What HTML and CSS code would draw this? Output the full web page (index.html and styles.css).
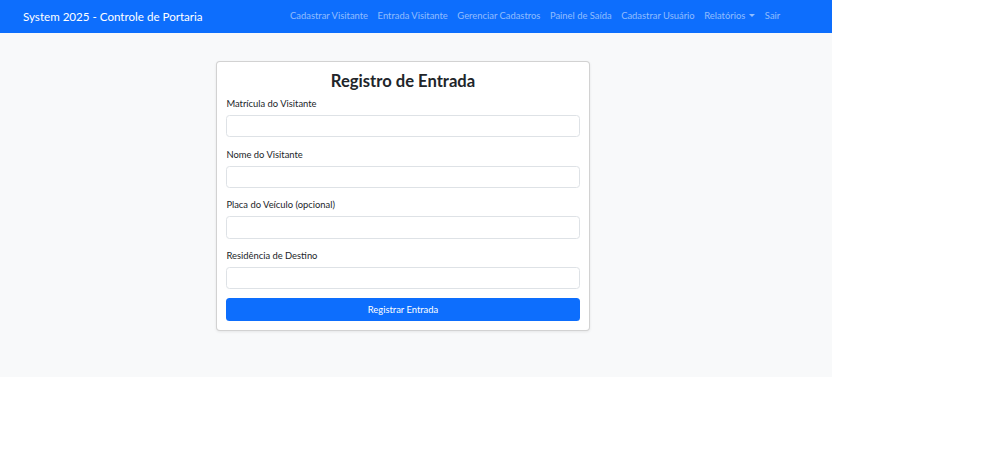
FILE: index.html
```html
<!DOCTYPE html>
<html lang="pt-BR">
<head>
  <meta charset="UTF-8">
  <meta name="viewport" content="width=device-width, initial-scale=1.0">
  <title>Registro de Entrada</title>
  <link rel="stylesheet" href="styles.css">
</head>
<body>
  <div class="page">
    <header class="navbar">
      <a class="brand" href="#">System 2025 - Controle de Portaria</a>
      <nav class="nav-links">
        <a href="#">Cadastrar Visitante</a>
        <a href="#">Entrada Visitante</a>
        <a href="#">Gerenciar Cadastros</a>
        <a href="#">Painel de Saída</a>
        <a href="#">Cadastrar Usuário</a>
        <a href="#" class="dropdown">Relatórios</a>
        <a href="#">Sair</a>
      </nav>
    </header>

    <main class="main">
      <form class="card">
        <h3>Registro de Entrada</h3>
        <div class="field">
          <label for="matricula">Matrícula do Visitante</label>
          <input type="text" id="matricula">
        </div>
        <div class="field">
          <label for="nome">Nome do Visitante</label>
          <input type="text" id="nome">
        </div>
        <div class="field">
          <label for="placa">Placa do Veículo (opcional)</label>
          <input type="text" id="placa">
        </div>
        <div class="field">
          <label for="residencia">Residência de Destino</label>
          <input type="text" id="residencia">
        </div>
        <button type="submit" class="btn-primary">Registrar Entrada</button>
      </form>
    </main>
  </div>
</body>
</html>
```
FILE: styles.css
```css
body { margin: 0; background: #fff; font-family: Lato, "Open Sans", sans-serif; font-size: 9.4px; line-height: 1.5; color: #212529; }
.page { width: 832px; background: #f8f9fa; }

.navbar { height: 33px; background: #0d6efd; display: flex; align-items: center; padding: 0 47px 0 23px; box-sizing: border-box; }
.brand { color: #fff; text-decoration: none; font-size: 11.6px; white-space: nowrap; }
.nav-links { margin-left: auto; display: flex; }
.nav-links a { color: rgba(255, 255, 255, 0.55); text-decoration: none; padding: 0 4.8px; white-space: nowrap; font-size: 9.4px; }
.dropdown::after { content: ""; display: inline-block; margin-left: 4px; vertical-align: 2px; border-top: 3px solid; border-left: 3px solid transparent; border-right: 3px solid transparent; }

.main { padding: 28px 0 46px 216px; }
.card { width: 374px; box-sizing: border-box; background: #fff; border: 1px solid rgba(0, 0, 0, 0.175); border-radius: 4px; box-shadow: 0 1px 3px rgba(0, 0, 0, 0.08); padding: 9.4px; }
.card h3 { margin: 0 0 4.7px; padding-top: 1px; text-align: center; font-size: 16.6px; font-weight: 700; line-height: 1.15; color: #212529; }
.field { margin-bottom: 9.4px; }
.field label { display: block; padding-top: 1px; margin-bottom: 3.7px; }
.field input { display: block; width: 100%; box-sizing: border-box; height: 22.4px; border: 1px solid #dee2e6; border-radius: 3.5px; background: #fff; }
.btn-primary { display: block; width: 100%; height: 22.4px; border: 0; border-radius: 3.5px; background: #0d6efd; color: #fff; font-family: inherit; font-size: 9.4px; }
```
